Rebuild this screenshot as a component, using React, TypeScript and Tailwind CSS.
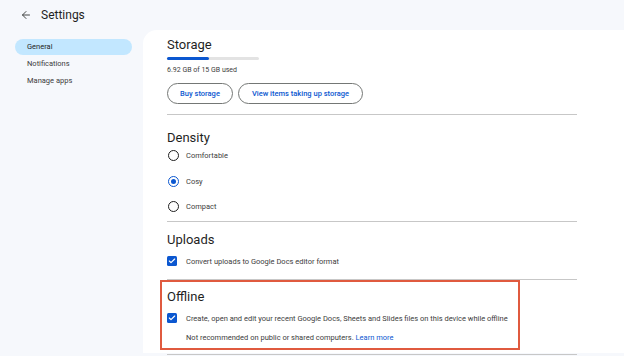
import { ArrowLeft, Check } from 'lucide-react';

const font = { fontFamily: 'Roboto, "Noto Sans", sans-serif' };

function Radio({ checked, label }: { checked?: boolean; label: string }) {
  return (
    <div className="flex h-[25.5px] items-center">
      <div
        className={`ml-[1px] flex h-[11px] w-[11px] items-center justify-center rounded-full border-[1.5px] ${
          checked ? 'border-[#0b57d0]' : 'border-[#1f1f1f]'
        }`}
      >
        {checked && <div className="h-[5px] w-[5px] rounded-full bg-[#0b57d0]" />}
      </div>
      <span className="ml-[7px] text-[7.5px] text-[#3c3c3c]">{label}</span>
    </div>
  );
}

function CheckBox() {
  return (
    <div className="flex h-[10px] w-[10px] items-center justify-center rounded-[1.5px] bg-[#0b57d0]">
      <Check size={8} strokeWidth={3.5} className="text-white" />
    </div>
  );
}

export default function App() {
  return (
    <div className="h-[356px] w-[624px] overflow-hidden bg-[#f6f8fc] text-[#1f1f1f]" style={font}>
      {/* Top bar */}
      <div className="flex h-[30px] items-center pl-[20px]">
        <ArrowLeft size={12} strokeWidth={2} className="text-[#444746]" />
        <span className="ml-[9px] text-[12px] text-[#1f1f1f]">Settings</span>
      </div>

      <div className="flex">
        {/* Sidebar */}
        <div className="w-[143px] shrink-0 pl-[15px] pr-[11px] pt-[9px]">
          <div className="flex h-[16px] items-center rounded-full bg-[#c2e7ff] pl-[12px] text-[7.5px] text-[#1f1f1f]">
            General
          </div>
          <div className="flex h-[17px] items-center pl-[12px] text-[7.5px] text-[#3c3c3c]">Notifications</div>
          <div className="flex h-[17px] items-center pl-[12px] text-[7.5px] text-[#3c3c3c]">Manage apps</div>
        </div>

        {/* Main panel */}
        <div className="h-[323px] flex-1 rounded-tl-[14px] bg-white pl-[24px] pr-[47px]">
          {/* Storage */}
          <div className="border-b border-[#c7c7c7] pb-[10px] pt-[6px]">
            <div className="text-[13px] leading-[18px]">Storage</div>
            <div className="mt-[3px] flex h-[3px] w-[92px] rounded-full bg-[#e3e3e3]">
              <div className="h-full w-[42px] rounded-full bg-[#0b57d0]" />
            </div>
            <div className="mt-[5px] text-[7px] leading-[10px] text-[#3c3c3c]">6.92 GB of 15 GB used</div>
            <div className="mt-[8px] flex gap-[5px]">
              <div className="flex h-[21px] w-[66px] items-center justify-center rounded-full border border-[#747775] text-[7.5px] font-medium text-[#0b57d0]">
                Buy storage
              </div>
              <div className="flex h-[21px] w-[125px] items-center justify-center rounded-full border border-[#747775] text-[7.5px] font-medium text-[#0b57d0]">
                View items taking up storage
              </div>
            </div>
          </div>

          {/* Density */}
          <div className="border-b border-[#c7c7c7] pb-[1px] pt-[14px]">
            <div className="text-[13px] leading-[18px]">Density</div>
            <div className="mt-[-4px]">
              <Radio label="Comfortable" />
              <Radio checked label="Cosy" />
              <Radio label="Compact" />
            </div>
          </div>

          {/* Uploads */}
          <div className="border-b border-[#c7c7c7] pb-[12px] pt-[9px]">
            <div className="text-[13px] leading-[18px]">Uploads</div>
            <div className="mt-[7px] flex items-center">
              <CheckBox />
              <span className="ml-[9px] text-[7.5px] text-[#3c3c3c]">Convert uploads to Google Docs editor format</span>
            </div>
          </div>

          {/* Offline */}
          <div className="relative border-b border-[#c7c7c7] pb-[11px] pt-[8px]">
            <div className="absolute left-[-7px] top-0 h-[70px] w-[360px] border-2 border-[#e05a3f]" />
            <div className="text-[13px] leading-[18px]">Offline</div>
            <div className="mt-[7px] flex items-center">
              <CheckBox />
              <span className="ml-[9px] text-[7.5px] text-[#3c3c3c]">
                Create, open and edit your recent Google Docs, Sheets and Slides files on this device while offline
              </span>
            </div>
            <div className="ml-[19px] mt-[8px] text-[7.5px] text-[#3c3c3c]">
              Not recommended on public or shared computers. <span className="text-[#0b57d0]">Learn more</span>
            </div>
          </div>
        </div>
      </div>
    </div>
  );
}
